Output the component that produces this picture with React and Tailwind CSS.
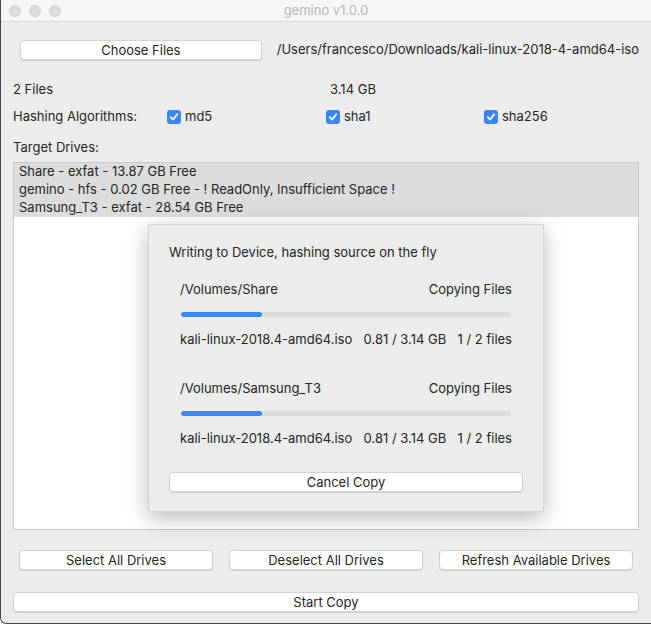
import * as React from "react"

const drives = [
  "Share - exfat - 13.87 GB Free",
  "gemino - hfs - 0.02 GB Free - ! ReadOnly, Insufficient Space !",
  "Samsung_T3 - exfat - 28.54 GB Free",
]

const copies = [
  { path: "/Volumes/Share", file: "kali-linux-2018.4-amd64.iso", done: 0.81, total: 3.14, files: "1 / 2 files", progress: 0.245 },
  { path: "/Volumes/Samsung_T3", file: "kali-linux-2018.4-amd64.iso", done: 0.81, total: 3.14, files: "1 / 2 files", progress: 0.245 },
]

function MacButton({ children, className = "" }) {
  return (
    <button
      type="button"
      className={
        "h-[20px] bg-white rounded-[4px] border border-[#d2d2d2] shadow-[0_1px_1px_rgba(0,0,0,0.12)] text-[13px] leading-none text-[#262626] flex items-center justify-center " +
        className
      }
    >
      {children}
    </button>
  )
}

function Check({ label }) {
  return (
    <div className="flex items-center gap-[4px]">
      <span className="w-[14px] h-[14px] rounded-[3px] bg-[#3b86f7] flex items-center justify-center">
        <svg width="10" height="10" viewBox="0 0 10 10">
          <path d="M1.8 5.2 L4 7.6 L8.3 2.2" fill="none" stroke="white" strokeWidth="1.7" strokeLinecap="round" strokeLinejoin="round" />
        </svg>
      </span>
      <span>{label}</span>
    </div>
  )
}

function CopyProgress({ item, first }) {
  return (
    <div className={"px-[31px] " + (first ? "mt-[19px]" : "mt-[31px]")}>
      <div className="h-[18px] flex items-center justify-between">
        <span>{item.path}</span>
        <span>Copying Files</span>
      </div>
      <div className="mt-[13px] h-[5px] rounded-full bg-[#dcdcdc] overflow-hidden mx-[1px]">
        <div className="h-full bg-[#3a87f6] rounded-full" style={{ width: item.progress * 100 + "%" }} />
      </div>
      <div className="mt-[14px] h-[18px] flex items-center justify-between">
        <span>{item.file}</span>
        <span>{item.done.toFixed(2)} / {item.total.toFixed(2)} GB</span>
        <span>{item.files}</span>
      </div>
    </div>
  )
}

export default function App() {
  return (
    <div
      className="w-[651px] h-[624px] bg-[#ececec] relative overflow-hidden border-l border-b border-[#4a4a4a] rounded-bl-[6px] text-[13px] text-[#262626]"
      style={{ fontFamily: "Inter, 'Noto Sans', sans-serif" }}
    >
      {/* title bar */}
      <div className="h-[22px] bg-[#f6f6f6] border-b border-[#d8d8d8] flex items-center relative">
        <div className="flex gap-[8px] pl-[8px]">
          <span className="w-[12px] h-[12px] rounded-full bg-[#dcdcdc] border border-[#d0d0d0]" />
          <span className="w-[12px] h-[12px] rounded-full bg-[#dcdcdc] border border-[#d0d0d0]" />
          <span className="w-[12px] h-[12px] rounded-full bg-[#dcdcdc] border border-[#d0d0d0]" />
        </div>
        <div className="absolute inset-0 flex items-center justify-center text-[#b8b8b8]">gemino v1.0.0</div>
      </div>

      <div className="pl-[12px] pr-[12px]">
        <div className="mt-[18px] h-[20px] flex items-center">
          <MacButton className="ml-[7px] w-[245px]">Choose Files</MacButton>
          <span className="ml-[15px] whitespace-nowrap">/Users/francesco/Downloads/kali-linux-2018-4-amd64-iso</span>
        </div>

        <div className="mt-[21px] h-[18px] flex items-center">
          <span className="w-[317px]">2 Files</span>
          <span>3.14 GB</span>
        </div>

        <div className="mt-[9px] h-[18px] flex items-center">
          <span className="w-[154px]">Hashing Algorithms:</span>
          <div className="w-[159px]"><Check label="md5" /></div>
          <div className="w-[158px]"><Check label="sha1" /></div>
          <Check label="sha256" />
        </div>

        <div className="mt-[13px] h-[18px] flex items-center">Target Drives:</div>

        <div className="mt-[5px] h-[368px] bg-white border border-[#c9c9c9]">
          {drives.map((d) => (
            <div key={d} className="h-[18px] bg-[#dcdcdc] flex items-center px-[5px]">{d}</div>
          ))}
        </div>

        <div className="mt-[20px] flex gap-[16px] px-[6px]">
          <MacButton className="flex-1">Select All Drives</MacButton>
          <MacButton className="flex-1">Deselect All Drives</MacButton>
          <MacButton className="flex-1">Refresh Available Drives</MacButton>
        </div>

        <MacButton className="mt-[22px] w-full">Start Copy</MacButton>
      </div>

      {/* copy dialog */}
      <div className="absolute left-[147px] top-[224px] w-[396px] h-[288px] bg-[#ececec] border border-[#d4d4d4] shadow-[0_6px_20px_rgba(0,0,0,0.28)]">
        <div className="mt-[19px] px-[20px] h-[18px] flex items-center">Writing to Device, hashing source on the fly</div>
        {copies.map((c, i) => (
          <CopyProgress key={c.path} item={c} first={i === 0} />
        ))}
        <div className="px-[20px] mt-[24px]">
          <MacButton className="w-full">Cancel Copy</MacButton>
        </div>
      </div>
    </div>
  )
}
